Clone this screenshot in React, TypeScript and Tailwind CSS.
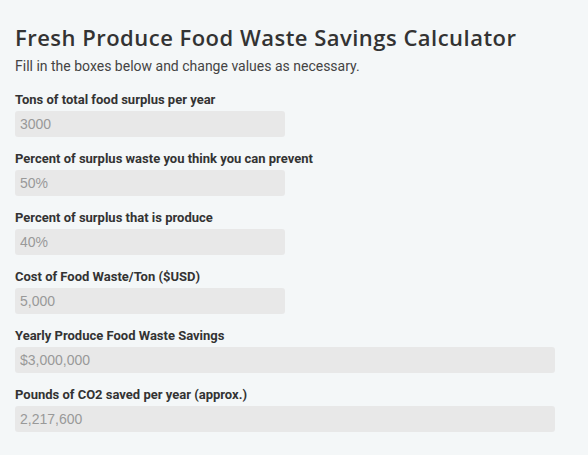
const fields = [
  { label: "Tons of total food surplus per year", value: "3000", wide: false },
  { label: "Percent of surplus waste you think you can prevent", value: "50%", wide: false },
  { label: "Percent of surplus that is produce", value: "40%", wide: false },
  { label: "Cost of Food Waste/Ton ($USD)", value: "5,000", wide: false },
  { label: "Yearly Produce Food Waste Savings", value: "$3,000,000", wide: true },
  { label: "Pounds of CO2 saved per year (approx.)", value: "2,217,600", wide: true },
];

export default function App() {
  return (
    <div className="min-h-[455px] bg-[#f4f7f8] px-[15px] pt-[23px] font-['Roboto',sans-serif]">
      <h1 className="font-['Open_Sans',sans-serif] text-[22px] font-semibold leading-[28px] tracking-[0.022em] text-[#333333]">
        Fresh Produce Food Waste Savings Calculator
      </h1>
      <p className="mt-[6px] text-[14px] leading-[18px] text-[#444444]">
        Fill in the boxes below and change values as necessary.
      </p>
      <div className="mt-[16px] flex flex-col gap-[13px]">
        {fields.map((f) => (
          <div key={f.label} className="flex flex-col">
            <label className="text-[13px] font-bold leading-[18px] text-[#333333]">{f.label}</label>
            <input
              readOnly
              placeholder={f.value}
              className={`mt-[2px] h-[26px] rounded-[3px] bg-[#e8e8e8] px-[5px] font-['Liberation_Sans',sans-serif] text-[14px] text-[#999999] placeholder:text-[#999999] outline-none ${
                f.wide ? "w-[540px]" : "w-[270px]"
              }`}
            />
          </div>
        ))}
      </div>
    </div>
  );
}
